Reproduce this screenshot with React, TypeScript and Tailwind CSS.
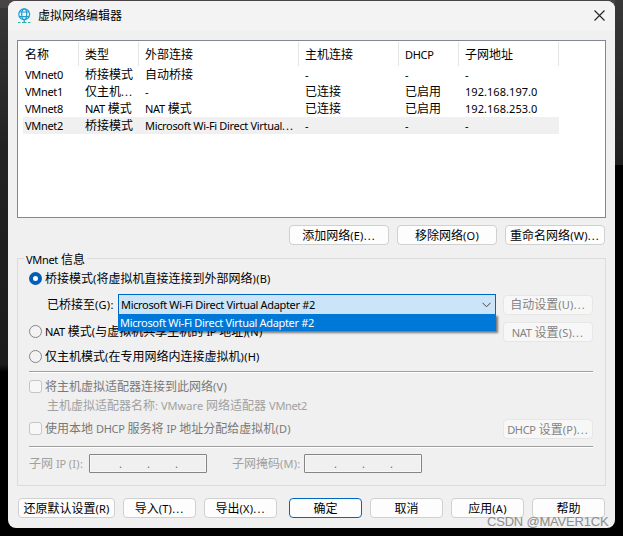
import React from "react";

const columns = [
  { title: "名称", width: "w-[60px]" },
  { title: "类型", width: "w-[60px]" },
  { title: "外部连接", width: "w-[160px]" },
  { title: "主机连接", width: "w-[100px]" },
  { title: "DHCP", width: "w-[60px]" },
  { title: "子网地址", width: "w-[100px]" },
];

const networks = [
  ["VMnet0", "桥接模式", "自动桥接", "-", "-", "-"],
  ["VMnet1", "仅主机...", "-", "已连接", "已启用", "192.168.197.0"],
  ["VMnet8", "NAT 模式", "NAT 模式", "已连接", "已启用", "192.168.253.0"],
  ["VMnet2", "桥接模式", "Microsoft Wi-Fi Direct Virtual...", "-", "-", "-"],
];

const selectedNetwork = "VMnet2";
const adapter = "Microsoft Wi-Fi Direct Virtual Adapter #2";

// Chinese glyphs are 12px, latin ones are set smaller and tighter
const latinStyle = (part: string) => {
  if (part === "...") return "text-[11px] tracking-[1.1px]";
  if (/^[()]/.test(part)) return "text-[11px] tracking-[0.25px]";
  if (/^[\d.:-]/.test(part)) return "text-[11px] tracking-[0.05px]";
  if (part.startsWith("Microsoft")) return "text-[11px] tracking-[-0.33px]";
  return "text-[11px] tracking-[-0.33px] [word-spacing:0.5px]";
};

const Text: React.FC<{ children: string; className?: string }> = ({ children, className = "" }) => (
  <span className={`whitespace-pre ${className}`}>
    {children
      .split(/([\u4e00-\u9fff]+|\.\.\.|\([A-Z]\)|\()/)
      .filter(Boolean)
      .map((part, i) => (
        <span key={i} className={/[\u4e00-\u9fff]/.test(part) ? "" : latinStyle(part)}>
          {part}
        </span>
      ))}
  </span>
);

const Button: React.FC<{
  children: string;
  className: string;
  disabled?: boolean;
  primary?: boolean;
}> = ({ children, className, disabled, primary }) => (
  <button
    disabled={disabled}
    className={`flex shrink-0 items-center justify-center rounded-[4px] border ${className} ${
      disabled
        ? "border-[#e6e6e6] bg-[#f7f7f7] text-[#838383]"
        : primary
        ? "border-[#0067c0] bg-[#fdfdfd]"
        : "border-[#d0d0d0] bg-[#fdfdfd]"
    }`}
  >
    <Text>{children}</Text>
  </button>
);

const Radio: React.FC<{ checked?: boolean; children: string }> = ({ children, checked }) => (
  <label className="flex h-[17px] items-center gap-[3px]">
    <span
      className={`h-[13px] w-[13px] shrink-0 rounded-full ${
        checked ? "border-4 border-[#005fb8] bg-white" : "border border-[#858585] bg-[#f3f3f3]"
      }`}
    />
    <Text>{children}</Text>
  </label>
);

const Checkbox: React.FC<{ children: string }> = ({ children }) => (
  <label className="flex h-[17px] items-center gap-[3px] text-[#787878]">
    <span className="h-[13px] w-[13px] shrink-0 rounded-[3px] border border-[#c5c5c5] bg-[#f7f7f7]" />
    <Text>{children}</Text>
  </label>
);

const Divider: React.FC = () => (
  <div className="h-[2px] w-[564px] border-b border-white bg-[#a0a0a0]" />
);

const IpField: React.FC = () => (
  <div className="flex h-[19px] w-[118px] items-center gap-[25px] rounded-[1px] border border-[#858585] pl-[29px] text-[11px] text-[#6d6d6d] shadow-[inset_0_0_0_1px_#f7f7f7]">
    <span className="w-[3px]">.</span>
    <span className="w-[3px]">.</span>
    <span className="w-[3px]">.</span>
  </div>
);

const GlobeIcon: React.FC = () => (
  <svg width="14" height="16" viewBox="0 0 14 16" fill="none">
    <g stroke="#1a9fd4" strokeWidth="1.2">
      <circle cx="6.2" cy="6.3" r="5.4" />
      <ellipse cx="6.2" cy="6.3" rx="2.5" ry="5.4" />
      <path d="M1.5 4h9.4M1.5 8.7h9.4M6.2 11.5v2.5" />
    </g>
    <path d="M0 14.5h2.5M4 14.5h4.5M10 14.5h2.5" stroke="#2bb3a0" strokeWidth="1.2" />
  </svg>
);

const App: React.FC = () => {
  return (
    <div className="relative h-[536px] w-[623px] overflow-hidden bg-black bg-[linear-gradient(#383838,#222_150px,#1c1c1c_365px,#000_372px)] bg-[length:8px_100%] bg-no-repeat pl-2 pt-px font-['Noto_Sans','Noto_Sans_CJK_SC',sans-serif] text-[12px] leading-[17px] text-black">
      <div className="absolute left-0 top-0 h-[8px] w-full bg-[#484346]" />
      <div className="absolute right-0 top-0 h-[165px] w-[8px] bg-[linear-gradient(#383838,#1f1f1f)]" />

      <div className="relative h-[527px] w-[607px] overflow-hidden rounded-[8px] bg-[#f0f0f0]">
        {/* Title bar */}
        <div className="flex h-[30px] items-center bg-[#f3f3f3] pl-[10px] pr-[10px]">
          <GlobeIcon />
          <Text className="ml-[6px] mt-[-1px]">虚拟网络编辑器</Text>
          <svg className="ml-auto mt-[-2px]" width="11" height="11" viewBox="0 0 11 11" stroke="#222" strokeWidth="1.1">
            <path d="M.5.5l10 10M10.5.5l-10 10" />
          </svg>
        </div>

        {/* Network list */}
        <div className="ml-[9px] mt-[9px] h-[178px] w-[589px] border border-[#828790] bg-white pl-px pt-px">
          <div className="flex h-[24px]">
            {columns.map((column) => (
              <div key={column.title} className={`flex items-center border-r border-[#e5e5e5] pl-[6px] ${column.width}`}>
                <Text>{column.title}</Text>
              </div>
            ))}
          </div>
          {networks.map((row) => (
            <div key={row[0]} className="flex h-[17px] w-[540px] pl-[4px]">
              <div className={`flex w-full ${row[0] === selectedNetwork ? "bg-[#f0f0f0]" : ""}`}>
                {row.map((cell, i) => (
                  <div key={i} className={`-ml-[4px] mr-[4px] shrink-0 pl-[6px] ${columns[i].width}`}>
                    <Text>{cell}</Text>
                  </div>
                ))}
              </div>
            </div>
          ))}
        </div>

        <div className="ml-[281px] mt-[7px] flex gap-2">
          <Button className="h-5 w-[100px]">添加网络(E)...</Button>
          <Button className="h-5 w-[100px]">移除网络(O)</Button>
          <Button className="h-5 w-[100px]">重命名网络(W)...</Button>
        </div>

        {/* VMnet details */}
        <fieldset className="ml-[9px] mt-[5px] h-[236px] w-[589px] border border-[#dcdcdc] pl-[11px]">
          <legend className="-ml-[5px] h-[17px] px-[2px] pt-px">
            <Text>VMnet 信息</Text>
          </legend>
          <div className="mt-[3px]">
            <Radio checked>桥接模式(将虚拟机直接连接到外部网络)(B)</Radio>
          </div>
          <div className="relative z-10 mt-[7px] flex h-[21px] items-center">
            <Text className="w-[89px] pl-[18px]">已桥接至(G):</Text>
            <div className="relative flex h-[21px] w-[378px] items-center border border-[#0067c0] bg-[#cce4f7] pl-[2px] pr-[4px]">
              <Text>{adapter}</Text>
              <svg className="ml-auto" width="9" height="6" viewBox="0 0 9 6" fill="none" stroke="#444">
                <path d="M.5.8l4 4 4-4" />
              </svg>
              <div className="absolute -left-px top-[19px] flex h-[17px] w-[378px] items-center bg-[#0078d7] pl-[2px] text-white shadow-[2px_2px_2px_rgba(0,0,0,0.5)]">
                <Text>{adapter}</Text>
              </div>
            </div>
            <Button disabled className="ml-[7px] h-5 w-[90px]">自动设置(U)...</Button>
          </div>
          <div className="mt-[7px] flex h-[20px] items-start justify-between pr-[12px]">
            <div className="pt-px">
              <Radio>NAT 模式(与虚拟机共享主机的 IP 地址)(N)</Radio>
            </div>
            <Button disabled className="h-5 w-[90px]">NAT 设置(S)...</Button>
          </div>
          <div className="mt-[6px]">
            <Radio>仅主机模式(在专用网络内连接虚拟机)(H)</Radio>
          </div>
          <div className="mt-[6px]">
            <Divider />
          </div>
          <div className="mt-[5px]">
            <Checkbox>将主机虚拟适配器连接到此网络(V)</Checkbox>
          </div>
          <div className="mt-[2px] flex pl-[18px] text-[#a0a0a0]">
            <Text>主机虚拟适配器名称: VMware 网络适配器 VMnet2</Text>
          </div>
          <div className="mt-[5px] flex h-[20px] items-start justify-between pr-[12px]">
            <div className="pt-px">
              <Checkbox>使用本地 DHCP 服务将 IP 地址分配给虚拟机(D)</Checkbox>
            </div>
            <Button disabled className="h-5 w-[90px]">DHCP 设置(P)...</Button>
          </div>
          <div className="mt-[7px]">
            <Divider />
          </div>
          <div className="mt-[6px] flex items-center text-[#a0a0a0]">
            <Text className="w-[60px]">子网 IP (I):</Text>
            <IpField />
            <Text className="ml-[25px] w-[72px]">子网掩码(M):</Text>
            <IpField />
          </div>
        </fieldset>

        {/* Dialog buttons */}
        <div className="ml-[10px] mt-[12px] flex gap-2">
          <Button className="h-5 w-[97px]">还原默认设置(R)</Button>
          <Button className="h-5 w-[73px]">导入(T)...</Button>
          <Button className="mr-1 h-5 w-[73px]">导出(X)...</Button>
          <Button primary className="h-5 w-[73px]">确定</Button>
          <Button className="h-5 w-[73px]">取消</Button>
          <Button className="h-5 w-[73px]">应用(A)</Button>
          <Button className="h-5 w-[73px]">帮助</Button>
        </div>
      </div>

      <div className="absolute left-[487px] top-[513px] whitespace-nowrap font-['Liberation_Sans',sans-serif] text-[13px] tracking-[-0.2px] text-[#8c8c8c]">
        CSDN @MAVER1CK
      </div>
    </div>
  );
};

export default App;
